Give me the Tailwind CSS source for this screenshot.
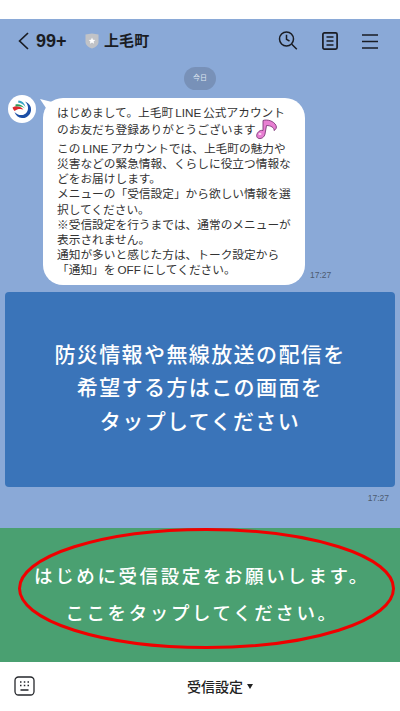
<!DOCTYPE html>
<html lang="ja">
<head>
<meta charset="utf-8">
<script src="https://cdn.jsdelivr.net/npm/@tailwindcss/browser@4"></script>
</head>
<body class="bg-white">
<div class="w-[400px] h-[711px] overflow-hidden flex flex-col bg-white font-['Liberation_Sans','Noto_Sans_CJK_JP',sans-serif]">
  <div class="h-[19px] bg-white shrink-0"></div>
  <div class="flex-1 min-h-0 bg-[#8aa9d7] flex flex-col">
    <header class="h-[44px] shrink-0 flex items-center pl-[18px] pr-[22px] text-[#1a1d24]">
      <svg class="w-[11px] h-[18px] mr-[7px]" viewBox="0 0 11 18" fill="none" stroke="#1a1d24" stroke-width="1.7"><path d="M10 1 1.600 9 10 17"/></svg>
      <span class="text-[18px] font-bold w-[49px]">99+</span>
      <svg class="w-[14px] h-[16px] mr-[5px]" viewBox="0 0 14 16"><path d="M0.500 1.500 7 0.500l6.500 1V9c0 3-3 5.500-6.500 6.500C3.500 14.500 0.500 12 0.500 9z" fill="#c1c3c7"/><path d="m7 4.500 1 2.200 2.300.2-1.700 1.500.5 2.300L7 9.600l-2.100 1.100.5-2.300L3.700 6.900 6 6.700z" fill="#fff"/></svg>
      <span class="text-[15px] font-bold tracking-[0.100px]">上毛町</span>
      <div class="ml-auto flex items-center gap-[24px]">
        <svg class="w-[20px] h-[20px]" viewBox="0 0 20 20" fill="none" stroke="#1a1d24" stroke-width="1.500"><circle cx="8.500" cy="8" r="7"/><path d="M8.500 3.800v4.500l3 1.700M13.800 13.200l5 5"/></svg>
        <svg class="w-[16px] h-[18px]" viewBox="0 0 16 18" fill="none" stroke="#1a1d24" stroke-width="1.700"><rect x="0.900" y="0.900" width="14.200" height="16.200" rx="1.500"/><path d="M4.500 5h7M4.500 9h7M4.500 13h7"/></svg>
        <svg class="w-[16px] h-[15px]" viewBox="0 0 16 15" fill="none" stroke="#1a1d24" stroke-width="1.300"><path d="M0 1h16M0 7.500h16M0 14h16"/></svg>
      </div>
    </header>
    <div class="flex justify-center mt-[4px] h-[23px] shrink-0">
      <span class="w-[32px] h-[23px] rounded-full bg-[#7891b8] text-[#dfe6f0] text-[7px] flex items-center justify-center">今日</span>
    </div>
    <section class="flex items-start pl-[8px] mt-[8px] shrink-0">
      <div class="w-[28px] h-[28px] -mt-[3px] rounded-full bg-white shrink-0 flex items-center justify-center">
        <svg class="w-[22px] h-[22px]" viewBox="0 0 22 22" fill="none"><path d="M14 3.500c4 1.500 6.500 5 6 9-.6 4.500-4.500 8-9 7.500-3.500-.3-6.500-2.500-7.500-6 2 2.300 5 3.500 8 3 3.500-.7 5.500-3.500 5.500-7 0-2.500-1-4.800-3-6.500z" fill="#1c4fa6"/><path d="M1.500 9.500C5 7.500 9 8 12.500 11.500c-3-1-6.500-.7-9 1.500C2.500 12 1.800 10.800 1.500 9.500z" fill="#dc2a2f"/><path d="M4.500 6.500C7.500 5.500 11 6.500 14 10.500 11.500 8.500 8 7.800 4.500 8.500z" fill="#2c9d59"/><path d="M7.500 2.500c3.500.2 6 2.500 7 6.500C12.500 6.500 10 5 7 4.500z" fill="#37a4c4"/></svg>
      </div>
      <div class="relative ml-[7px] w-[262px] h-[187px] bg-white rounded-[20px] shrink-0 pl-[14px] pt-[7px] text-[11.700px] leading-[15.100px] text-[#333]">
        <svg class="absolute left-[-3px] top-[1px] w-[12px] h-[12px]" viewBox="0 0 12 12"><path d="M0 0 12 3 8 12z" fill="#fff"/></svg>
        <p class="relative whitespace-nowrap">はじめまして。上毛町<span class="mx-[2px]">LINE</span>公式アカウント</p>
        <p class="relative whitespace-nowrap mt-[2px] flex items-center">のお友だち登録ありがとうございます<svg class="w-[22px] h-[22px] -my-[4px] -mt-[6px]" viewBox="0 0 22 22"><path d="M7 2.500c4-1.500 11 .5 13 5 1 2 0 4-2 5 .5-3-3.500-5-7.500-5L9 16c-.5 3-3.500 5-6 4.500S0 17.500 1.500 15s4-3 5.500-2.500z" fill="#e87fd2" stroke="#7d3878" stroke-width="0.900"/><ellipse cx="4" cy="16" rx="1.500" ry="1" fill="#fbdcf4"/></svg></p>
        <div class="mt-[4px] whitespace-nowrap">
          <p>この<span class="mx-[2px]">LINE</span>アカウントでは、上毛町の魅力や</p>
          <p>災害などの緊急情報、くらしに役立つ情報な</p>
          <p>どをお届けします。</p>
          <p>メニューの「受信設定」から欲しい情報を選</p>
          <p>択してください。</p>
          <p>※受信設定を行うまでは、通常のメニューが</p>
          <p>表示されません。</p>
          <p>通知が多いと感じた方は、トーク設定から</p>
          <p>「通知」を<span class="mx-[2px]">OFF</span>にしてください。</p>
        </div>
        <span class="absolute left-[267px] bottom-[6px] text-[8.500px] text-[#4d5b70] leading-none">17:27</span>
      </div>
    </section>
    <section class="mx-[5px] mt-[7px] h-[195px] shrink-0 rounded-[4px] bg-[#3a74b9] flex flex-col items-center justify-center text-white font-medium text-[21px] leading-[33.500px] tracking-[1.400px] pb-[5px] font-['Noto_Sans_CJK_JP',sans-serif]">
      <p>防災情報や無線放送の配信を</p>
      <p>希望する方はこの画面を</p>
      <p>タップしてください</p>
    </section>
    <div class="text-right pr-[11px] mt-[6px] text-[8.500px] leading-[10px] text-[#4d5b70]">17:27</div>
  </div>
  <section class="relative h-[134px] shrink-0 bg-[#4aa071] flex flex-col items-center justify-center text-white font-medium text-[18.500px] leading-[36.500px] tracking-[2.600px] pb-[3px] pl-[4px] font-['Noto_Sans_CJK_JP',sans-serif]">
    <p>はじめに受信設定をお願いします。</p>
    <p>ここをタップしてください。</p>
    <svg class="absolute left-[18px] top-0 w-[378px] h-[122px]" viewBox="0 0 378 122" fill="none"><ellipse cx="188.500" cy="60.500" rx="187" ry="59" stroke="#f00000" stroke-width="3"/></svg>
  </section>
  <footer class="h-[49px] shrink-0 bg-white relative flex items-center">
    <svg class="absolute left-[14px] top-[14px] w-[21px] h-[20px]" viewBox="0 0 21 20" fill="none"><rect x="1" y="1" width="19" height="18" rx="3.500" stroke="#25272c" stroke-width="1.300"/><path d="M6 6h1.500M9.800 6h1.500M13.500 6h1.500M6 9.500h1.500M9.800 9.500h1.500M13.500 9.500h1.500M6.500 14h8" stroke="#25272c" stroke-width="1.300"/></svg>
    <div class="ml-[187px] flex items-center text-[14px] font-medium text-[#222] font-['Noto_Sans_CJK_JP',sans-serif]">受信設定<span class="ml-[4px] w-0 h-0 border-x-[3px] border-x-transparent border-t-[5px] border-t-[#222]"></span></div>
  </footer>
</div>
</body>
</html>
